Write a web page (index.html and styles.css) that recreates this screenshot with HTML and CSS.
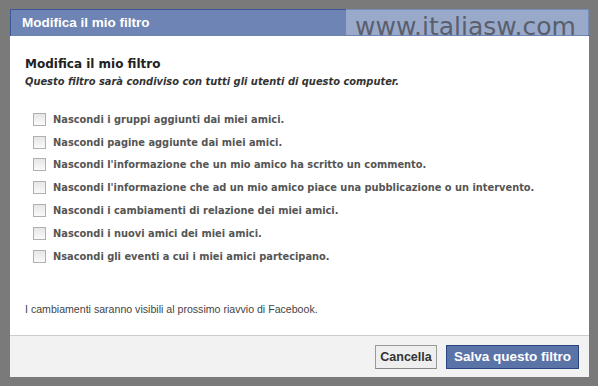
FILE: index.html
```html
<!doctype html>
<html>
<head>
 <meta charset="utf-8">
 <title>Modifica il mio filtro</title>
 <link rel="stylesheet" href="styles.css">
</head>
<body>
  <div class="backdrop">
    <div class="dialog">
      <div class="dialog-head">Modifica il mio filtro</div>
      <div class="dialog-body">
        <h2 class="filter-title">Modifica il mio filtro</h2>
        <p class="filter-note">Questo filtro sarà condiviso con tutti gli utenti di questo computer.</p>
        <ul class="options">
          <li><span class="box"></span>Nascondi i gruppi aggiunti dai miei amici.</li>
          <li><span class="box"></span>Nascondi pagine aggiunte dai miei amici.</li>
          <li><span class="box"></span>Nascondi l'informazione che un mio amico ha scritto un commento.</li>
          <li><span class="box"></span>Nascondi l'informazione che ad un mio amico piace una pubblicazione o un intervento.</li>
          <li><span class="box"></span>Nascondi i cambiamenti di relazione dei miei amici.</li>
          <li><span class="box"></span>Nascondi i nuovi amici dei miei amici.</li>
          <li><span class="box"></span>Nsacondi gli eventi a cui i miei amici partecipano.</li>
        </ul>
        <p class="restart">I cambiamenti saranno visibili al prossimo riavvio di Facebook.</p>
      </div>
      <div class="dialog-foot">
        <button class="btn btn-cancel">Cancella</button>
        <button class="btn btn-blue">Salva questo filtro</button>
      </div>
      <div class="watermark">www.italiasw.com</div>
    </div>
  </div>
</body>
</html>
```
FILE: styles.css
```css
* {
    margin: 0;
    padding: 0;
}
body {
    background: #7a7a7a;
    font-family: Tahoma, "DejaVu Sans", sans-serif;
    width: 598px;
    height: 386px;
    overflow: hidden;
}
.backdrop {
    padding: 9px 0 0 10px;
}
.dialog {
    position: relative;
    width: 579px;
    height: 368px;
    background: #fff;
    display: flex;
    flex-direction: column;
}
.dialog-head {
    height: 26px;
    line-height: 26px;
    background: #6d84b4;
    color: #fff;
    font-family: "Liberation Sans", Arial, sans-serif;
    font-weight: bold;
    font-size: 13.5px;
    padding-left: 11px;
    border: 1px solid #3b5998;
    border-bottom: 0;
}
.dialog-body {
    flex: 1;
    padding: 21px 15px 0 15px;
    color: #333;
}
.filter-title {
    font-size: 12px;
    font-weight: bold;
    color: #222;
}
.filter-note {
    font-size: 9.9px;
    font-weight: bold;
    font-style: italic;
    margin-top: 5px;
}
.options {
    list-style: none;
    margin-top: 21px;
    padding-left: 8px;
}
.options li {
    display: flex;
    align-items: center;
    height: 22.8px;
    font-size: 9.85px;
    font-weight: bold;
    color: #555;
}
.box {
    width: 11px;
    height: 11px;
    border: 1px solid #b0b0b0;
    background: linear-gradient(#e6e6e6, #fafafa);
    margin-right: 7px;
}
.restart {
    margin-top: 35px;
    font-family: "Liberation Sans", Arial, sans-serif;
    font-size: 10.6px;
    color: #444;
}
.dialog-foot {
    height: 41px;
    background: #f2f2f2;
    border-top: 1px solid #ccc;
    display: flex;
    justify-content: flex-end;
    align-items: center;
    gap: 9px;
    padding-right: 10px;
}
.btn {
    font-family: "Liberation Sans", Arial, sans-serif;
    font-size: 12.5px;
    font-weight: bold;
    height: 24px;
    background: #eee;
    color: #333;
    border: 1px solid #999;
    border-bottom-color: #888;
}
.btn-cancel {
    width: 62px;
}
.btn-blue {
    width: 133px;
    font-size: 13.5px;
    background: #5b74a8;
    color: #fff;
    border-color: #29447e;
}
.watermark {
    position: absolute;
    top: 0;
    right: 0;
    width: 243px;
    height: 26px;
    background: rgba(255, 255, 255, 0.3);
    color: #5a5f6b;
    font-family: "DejaVu Sans", sans-serif;
    font-size: 25px;
    line-height: 36px;
    padding-left: 9px;
    box-sizing: border-box;
    white-space: nowrap;
}
```
